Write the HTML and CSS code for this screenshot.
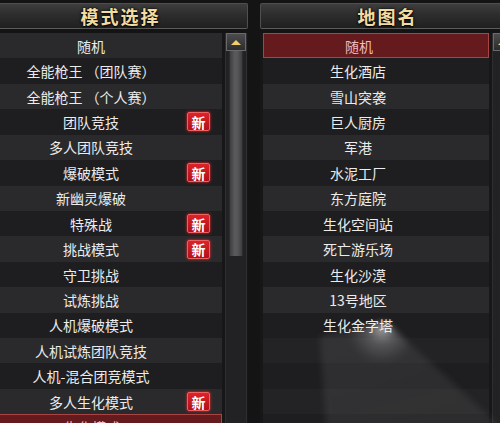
FILE: index.html
```html
<!DOCTYPE html>
<html lang="zh-CN">

    <head>
        <meta charset="UTF-8">
        <meta name="viewport" content="width=device-width, initial-scale=1.0">
        <title>模式选择</title>

        <link rel="stylesheet" href="styles.css">
    </head>

    <body>

        <main class="screen">
            <section class="panel">
                <div class="panel-head"><h2>模式选择</h2></div>
                <div class="panel-body">
                    <ul class="list">
                        <li class="row"><span class="name">随机</span></li>
                        <li class="row"><span class="name">全能枪王 （团队赛）</span></li>
                        <li class="row"><span class="name">全能枪王 （个人赛）</span></li>
                        <li class="row"><span class="name">团队竞技</span><span class="badge">新</span></li>
                        <li class="row"><span class="name">多人团队竞技</span></li>
                        <li class="row"><span class="name">爆破模式</span><span class="badge">新</span></li>
                        <li class="row"><span class="name">新幽灵爆破</span></li>
                        <li class="row"><span class="name">特殊战</span><span class="badge">新</span></li>
                        <li class="row"><span class="name">挑战模式</span><span class="badge">新</span></li>
                        <li class="row"><span class="name">守卫挑战</span></li>
                        <li class="row"><span class="name">试炼挑战</span></li>
                        <li class="row"><span class="name">人机爆破模式</span></li>
                        <li class="row"><span class="name">人机试炼团队竞技</span></li>
                        <li class="row"><span class="name">人机-混合团竞模式</span></li>
                        <li class="row"><span class="name">多人生化模式</span><span class="badge">新</span></li>
                        <li class="row selected"><span class="name">生化模式</span></li>
                    </ul>
                    <div class="scrollbar">
                        <div class="scroll-btn"><span class="arrow"></span></div>
                        <div class="scroll-thumb"></div>
                    </div>
                </div>
            </section>

            <section class="panel">
                <div class="panel-head"><h2>地图名</h2></div>
                <div class="panel-body">
                    <ul class="list">
                        <li class="row selected"><span class="name">随机</span></li>
                        <li class="row"><span class="name">生化酒店</span></li>
                        <li class="row"><span class="name">雪山突袭</span></li>
                        <li class="row"><span class="name">巨人厨房</span></li>
                        <li class="row"><span class="name">军港</span></li>
                        <li class="row"><span class="name">水泥工厂</span></li>
                        <li class="row"><span class="name">东方庭院</span></li>
                        <li class="row"><span class="name">生化空间站</span></li>
                        <li class="row"><span class="name">死亡游乐场</span></li>
                        <li class="row"><span class="name">生化沙漠</span></li>
                        <li class="row"><span class="name">13号地区</span></li>
                        <li class="row"><span class="name">生化金字塔</span></li>
                        <li class="row empty"></li>
                        <li class="row empty"></li>
                        <li class="row empty"></li>
                        <li class="row empty"></li>
                    </ul>
                    <div class="scrollbar">
                        <div class="scroll-btn"><span class="arrow"></span></div>
                    </div>
                </div>
                <div class="glare"><div class="glare-shape"></div></div>
            </section>
        </main>

    </body>

</html>
```

FILE: styles.css
```css
body {
    margin: 0;
    padding: 0;
    width: 500px;
    height: 423px;
    overflow: hidden;
    background-color: #141414;
    font-family: "Noto Sans CJK SC", "DejaVu Sans", sans-serif;
}

.screen {
    display: flex;
    gap: 12px;
    margin-left: -7px;
    padding-top: 3px;
}

.panel {
    position: relative;
    width: 255px;
    flex-shrink: 0;
    display: flex;
    flex-direction: column;
    gap: 4px;
}

.panel-head {
    height: 24px;
    display: flex;
    align-items: center;
    justify-content: center;
    background: linear-gradient(#3d3d3d, #2d2d2d 45%, #202020);
    border: 1px solid #4f4f4f;
    border-bottom-color: #5c5c5c;
    border-radius: 2px;
}

.panel-head h2 {
    margin: 0;
    font-size: 18px;
    font-weight: bold;
    letter-spacing: 2px;
    color: #f1dca2;
    text-shadow: 0 0 3px #000, 0 1px 2px #000;
}

.panel-body {
    display: flex;
    gap: 3px;
    padding-left: 3px;
    height: 392px;
    overflow: hidden;
    background-color: #171717;
}

.list {
    list-style: none;
    margin: 0;
    padding: 0;
    width: 226px;
    flex-shrink: 0;
}

.row {
    height: 25.43px;
    box-sizing: border-box;
    display: grid;
    grid-template-columns: 190px 1fr;
    align-items: center;
    background-color: #1e1e20;
    color: #ececec;
    font-size: 14px;
}

.row:nth-child(odd) {
    background-color: #2a2a2c;
}

.name {
    text-align: center;
    white-space: nowrap;
}

.badge {
    justify-self: start;
    margin-left: 1px;
    width: 21px;
    height: 17px;
    display: flex;
    align-items: center;
    justify-content: center;
    background: linear-gradient(#dc2328, #b0101a);
    border: 1px solid #ef6060;
    border-radius: 2px;
    box-shadow: 0 0 3px #ff2a2a;
    color: #fff;
    font-size: 14px;
    font-weight: bold;
}

.row.selected {
    background-color: #651b1d;
    border: 1px solid #a94444;
    color: #f2baba;
}

.row.empty:nth-child(odd) {
    background-color: #232325;
}

.scrollbar {
    width: 20px;
    flex-shrink: 0;
    display: flex;
    flex-direction: column;
    background-color: #222224;
    border-left: 1px solid #2e2e30;
    border-right: 1px solid #2e2e30;
}

.scroll-btn {
    height: 18px;
    box-sizing: border-box;
    display: flex;
    align-items: center;
    justify-content: center;
    background: linear-gradient(#4c4c4e, #2c2c2e);
    border: 1px solid #6a6a6a;
}

.arrow {
    width: 0;
    height: 0;
    border-left: 5px solid transparent;
    border-right: 5px solid transparent;
    border-bottom: 5px solid #f0cf6a;
}

.scroll-thumb {
    height: 205px;
    margin: 0 3px;
    background: linear-gradient(90deg, #3e3e40, #5a5a5c 40%, #58585a 60%, #3e3e40);
    border-left: 1px solid #2c2c2e;
    border-right: 1px solid #2c2c2e;
}

.glare {
    position: absolute;
    left: 0;
    top: 0;
    width: 255px;
    height: 423px;
    filter: blur(3px);
    pointer-events: none;
}

.glare-shape {
    width: 100%;
    height: 100%;
    clip-path: polygon(60px 333px, 126px 319px, 240px 423px, 66px 423px);
    background:
        radial-gradient(circle at 122px 326px, rgba(255, 255, 255, 0.55) 0, rgba(255, 255, 255, 0.18) 14px, rgba(255, 255, 255, 0) 34px),
        linear-gradient(165deg, rgba(210, 210, 210, 0.2) 0%, rgba(180, 180, 180, 0.14) 40%, rgba(160, 160, 160, 0.11) 100%);
}
```
